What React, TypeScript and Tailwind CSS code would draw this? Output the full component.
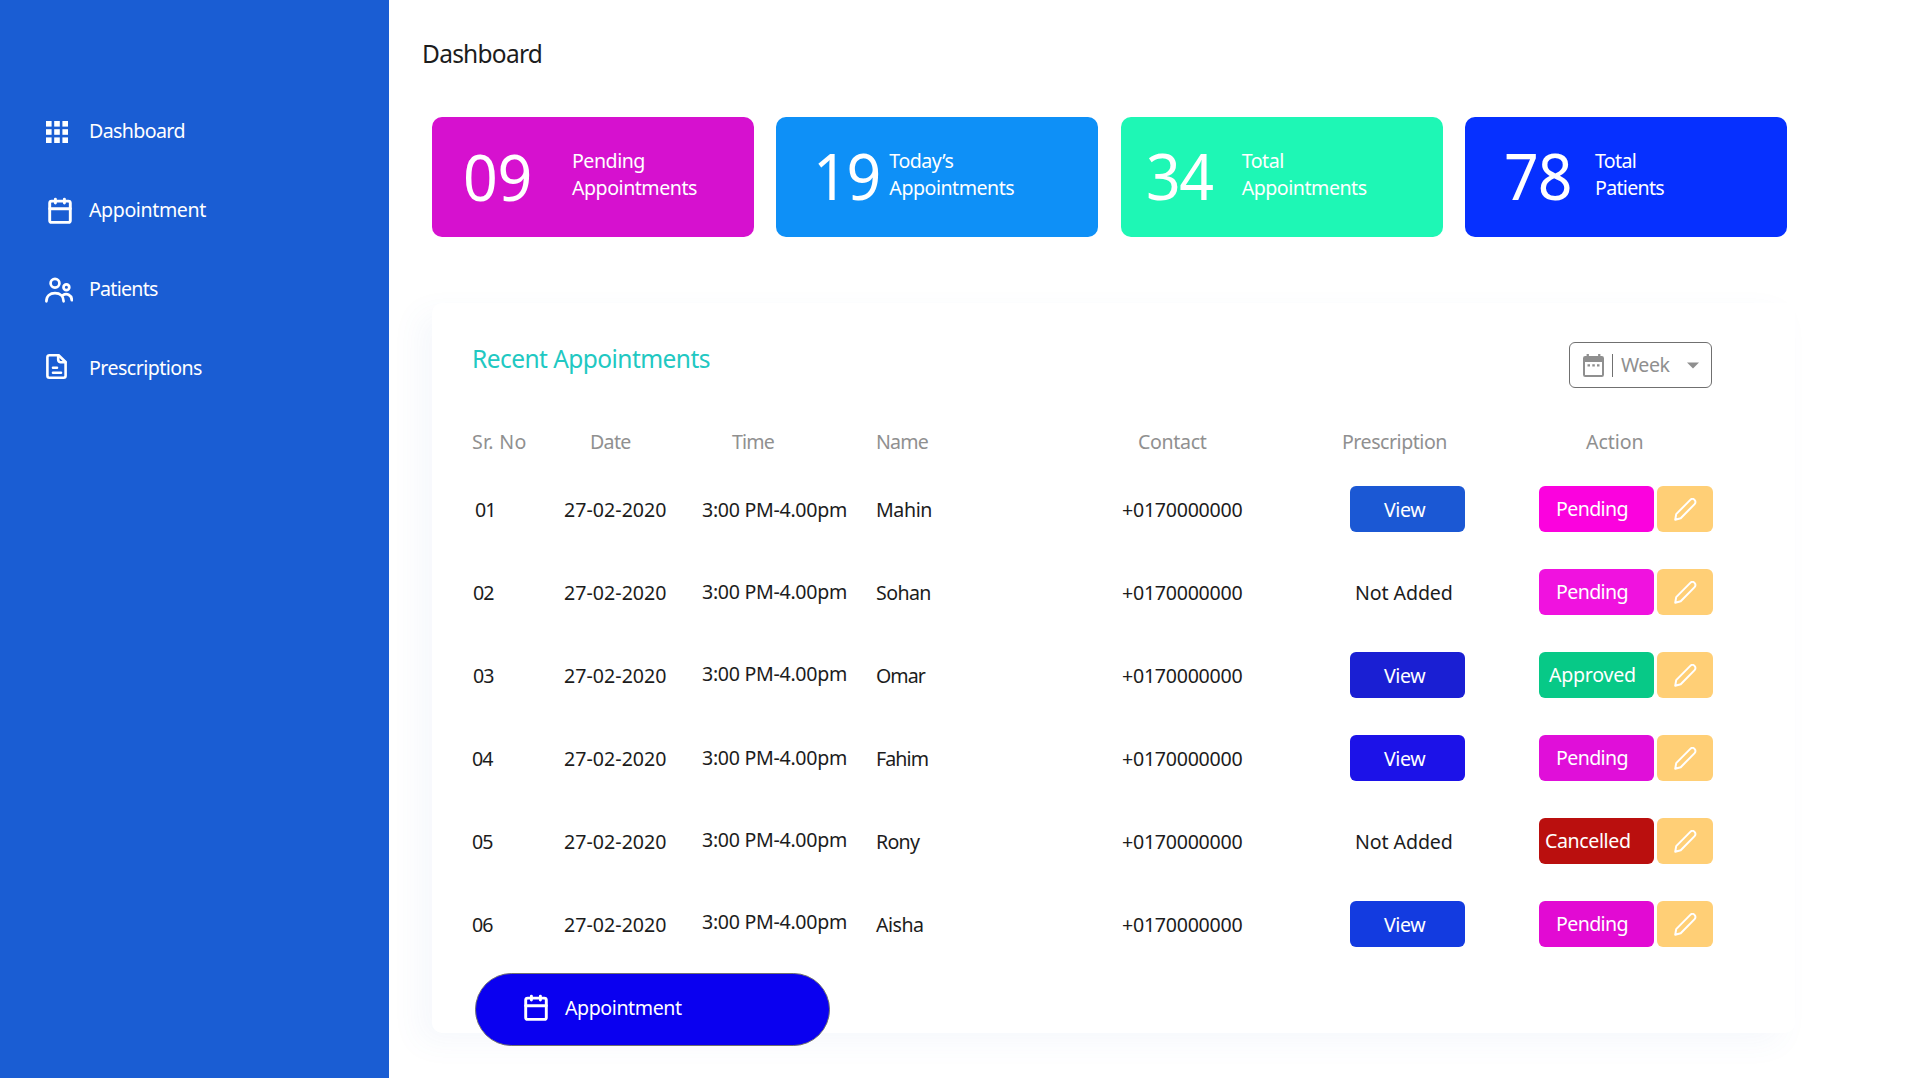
import React from 'react';

function GridIcon() {
  const cells = [0, 8.2, 16.4];
  return (
    <svg className="mt-[2px]" width="22" height="22" viewBox="0 0 22 22" fill="currentColor">
      {cells.map((y) => cells.map((x) => <rect key={`${x}-${y}`} x={x} y={y} width="5.6" height="5.6" />))}
    </svg>
  );
}

function CalendarIcon({ className = '' }: { className?: string }) {
  return (
    <svg
      className={className}
      width="24"
      height="27"
      viewBox="0 0 24 27"
      fill="none"
      stroke="currentColor"
      strokeWidth="2.9"
      strokeLinecap="round"
      strokeLinejoin="round"
    >
      <rect x="1.7" y="4.1" width="20.6" height="21.3" rx="2" />
      <path d="M1.7 11.8h20.6M7.4 2.1v4M16.4 2.1v4" />
    </svg>
  );
}

function PatientsIcon() {
  return (
    <svg className="mt-px" width="28" height="28" viewBox="0 0 28 28" fill="none" stroke="currentColor" strokeWidth="2.7" strokeLinecap="round">
      <circle cx="10" cy="7.3" r="4.4" />
      <circle cx="21.4" cy="11.3" r="2.9" />
      <path d="M1.4 25.3C1.4 20.2 5 17.2 10 17.2s8.6 3 8.6 8.1" />
      <path d="M17.6 19.3c4-2.7 9.1-.6 9.2 4.9" />
    </svg>
  );
}

function DocumentIcon() {
  return (
    <svg className="mb-[3px]" width="21" height="27" viewBox="0 0 21 27" fill="none" stroke="currentColor" strokeWidth="2.6" strokeLinecap="round" strokeLinejoin="round">
      <path d="M12.6 2.2H3.4a2 2 0 0 0-2 2v18.6a2 2 0 0 0 2 2h14.2a2 2 0 0 0 2-2V9z" />
      <path d="M12.2 2.6v4.2a2.4 2.4 0 0 0 2.4 2.4h4.8M7 14.8h4M7 19.7h8" />
    </svg>
  );
}

function PencilIcon() {
  return (
    <svg width="23" height="23" viewBox="0 0 23 23" fill="none" stroke="currentColor" strokeWidth="2" strokeLinejoin="round">
      <path d="M1.2 21.8l1-5.7L16.3 1.9a2.9 2.9 0 0 1 4.3 4.2L6.7 20.2z" />
    </svg>
  );
}

function FilterCalendarIcon() {
  return (
    <svg width="21" height="23" viewBox="0 0 21 23" fill="currentColor">
      <path
        fillRule="evenodd"
        d="M3.6 0h2.3v2h9.2V0h2.3v2h1.4A2.2 2.2 0 0 1 21 4.2v16.6a2.2 2.2 0 0 1-2.2 2.2H2.2A2.2 2.2 0 0 1 0 20.8V4.2A2.2 2.2 0 0 1 2.2 2h1.4zM2 8v12.9h17V8z"
      />
      <path d="M4.5 10.2h2.5v2.4h-2.5zM9.3 10.2h2.5v2.4h-2.5zM14 10.2h2.5v2.4h-2.5z" />
    </svg>
  );
}

const nav = [
  { label: 'Dashboard', icon: <GridIcon />, pad: 'pl-[46px]', track: 'tracking-[-0.62px]' },
  { label: 'Appointment', icon: <CalendarIcon />, pad: 'pl-[48px]', track: 'tracking-[-0.4px]' },
  { label: 'Patients', icon: <PatientsIcon />, pad: 'pl-[45px]', track: 'tracking-[-0.75px]' },
  { label: 'Prescriptions', icon: <DocumentIcon />, pad: 'pl-[46px]', track: 'tracking-[-0.55px]' },
];

const stats = [
  { n: '09', a: 'Pending', b: 'Appointments', bg: 'bg-[#d611cf]', pad: 'pl-[31px]', num: 'w-[109px] pt-[15px] tracking-[-0.3px]', text: 'tracking-[-0.48px]' },
  { n: '19', a: 'Today’s', b: 'Appointments', bg: 'bg-[#0e90f7]', pad: 'pl-[37px]', num: 'w-[76px] pt-[14px] tracking-[-1.3px]', text: 'tracking-[-0.48px]' },
  { n: '34', a: 'Total', b: 'Appointments', bg: 'bg-[#1ef7b5]', pad: 'pl-[25px]', num: 'w-[96px] pt-[14px] tracking-[-1.5px]', text: 'tracking-[-0.48px]' },
  { n: '78', a: 'Total', b: 'Patients', bg: 'bg-[#0630ff]', pad: 'pl-[39px]', num: 'w-[91px] pt-[14px] tracking-[-1px]', text: 'tracking-[-0.7px]' },
];

const rows = [
  { no: '01', pad: 'pl-[3px]', name: 'Mahin', nt: 'tracking-[-0.4px]', time: 'pb-0', view: 'bg-[#1b58d4]', status: 'Pending', sc: 'bg-[#fb02de] pl-[17px] tracking-[-0.62px]' },
  { no: '02', pad: 'pl-px', name: 'Sohan', nt: 'tracking-[-0.6px]', time: 'pb-[2px]', view: '', status: 'Pending', sc: 'bg-[#f012df] pl-[17px] tracking-[-0.62px]' },
  { no: '03', pad: 'pl-px', name: 'Omar', nt: 'tracking-[-0.95px]', time: 'pb-[4px]', view: 'bg-[#1a1fd3]', status: 'Approved', sc: 'bg-[#07c987] pl-[10px] tracking-[-0.25px]' },
  { no: '04', pad: 'pl-0', name: 'Fahim', nt: 'tracking-[-0.9px]', time: 'pb-[2px]', view: 'bg-[#1c12e8]', status: 'Pending', sc: 'bg-[#e00fd9] pl-[17px] tracking-[-0.62px]' },
  { no: '05', pad: 'pl-0', name: 'Rony', nt: 'tracking-[-0.75px]', time: 'pb-[4px]', view: '', status: 'Cancelled', sc: 'bg-[#ba0f0e] pl-[6px] tracking-[-0.4px]' },
  { no: '06', pad: 'pl-0', name: 'Aisha', nt: 'tracking-[-0.5px]', time: 'pb-[6px]', view: 'bg-[#133be0]', status: 'Pending', sc: 'bg-[#e20ad3] pl-[17px] tracking-[-0.62px]' },
];

const columns = 'grid grid-cols-[92px_138px_174px_246px_220px_197px_174px] items-center';

export default function App() {
  return (
    <div className="flex h-[1078px] w-[1920px] overflow-hidden bg-white font-['Noto_Sans',sans-serif] text-[19.6px] leading-[26px] whitespace-nowrap text-black">
      <aside className="w-[389px] shrink-0 bg-[#1a5dd3] pt-[118px] text-white">
        <nav className="flex flex-col gap-[53px]">
          {nav.map((item) => (
            <a key={item.label} className="flex h-[26px] items-center">
              <span className={`flex h-[26px] w-[89px] shrink-0 items-center ${item.pad}`}>{item.icon}</span>
              <span className={item.track}>{item.label}</span>
            </a>
          ))}
        </nav>
      </aside>

      <main className="flex flex-col">
        <h1 className="mt-[38px] ml-[33px] h-8 text-[24.5px] leading-8 tracking-[-0.75px] text-[#1c1c1c]">Dashboard</h1>

        <section className="mt-[47px] ml-[43px] grid w-[1355px] grid-cols-4 gap-[22.4px]">
          {stats.map((s) => (
            <div key={s.n} className={`flex h-[120px] rounded-[10px] text-white ${s.bg} ${s.pad}`}>
              <div className={`shrink-0 text-[64px] leading-[90px] ${s.num}`}>
                <span className="block origin-left scale-x-95">{s.n}</span>
              </div>
              <div className={`pt-[30px] leading-[27px] ${s.text}`}>
                <div>{s.a}</div>
                <div>{s.b}</div>
              </div>
            </div>
          ))}
        </section>

        <section className="relative mt-[66px] ml-[43px] h-[730px] w-[1363px] rounded-[10px] bg-white pl-10 shadow-[-14px_10px_30px_rgba(70,110,200,0.05)]">
          <div className="flex justify-between pt-[39px] pr-[83px]">
            <h2 className="mt-px h-8 text-[24.5px] leading-8 tracking-[-0.55px] text-[#21c8c2]">Recent Appointments</h2>
            <button className="flex h-[46px] w-[143px] items-center rounded-[6px] border border-[#707070] pl-[13px] text-[#8f8f8f]">
              <FilterCalendarIcon />
              <span className="ml-2 h-[23px] w-px bg-[#707070]" />
              <span className="ml-2 tracking-[-0.5px]">Week</span>
              <svg className="ml-[18px]" width="12" height="7" viewBox="0 0 12 7" fill="currentColor">
                <path d="M0 .5h12L6 6.5z" />
              </svg>
            </button>
          </div>

          <div className={`mt-[41px] h-[26px] text-[#909090] ${columns}`}>
            <span className="tracking-[0.3px]">Sr. No</span>
            <span className="pl-[26px] tracking-[-0.7px]">Date</span>
            <span className="pl-[30px] tracking-[-0.8px]">Time</span>
            <span className="tracking-[-0.8px]">Name</span>
            <span className="pl-4 tracking-[-0.35px]">Contact</span>
            <span className="tracking-[-0.48px]">Prescription</span>
            <span className="pl-[47px] tracking-[-0.1px]">Action</span>
          </div>

          <div className="mt-[31px] flex flex-col gap-[37px] text-[#1c1c1c]">
            {rows.map((r) => (
              <div key={r.no} className={`h-[46px] ${columns}`}>
                <span className={`pt-[2px] tracking-[-0.9px] ${r.pad}`}>{r.no}</span>
                <span className="pt-[2px] tracking-[0.03px]">27-02-2020</span>
                <span className={`tracking-[-0.3px] ${r.time}`}>
                  <span className="block pt-[2px]">3:00 PM-4.00pm</span>
                </span>
                <span className={`pt-[2px] ${r.nt}`}>{r.name}</span>
                <span className="pt-[2px] tracking-[-0.27px]">+0170000000</span>
                {r.view ? (
                  <button className={`ml-2 flex h-[46px] w-[115px] items-center rounded-[6px] pt-[2px] pl-[34px] tracking-[-0.4px] text-white ${r.view}`}>
                    View
                  </button>
                ) : (
                  <span className="pt-[2px] pl-[13px] tracking-[-0.1px]">Not Added</span>
                )}
                <div className="flex gap-[3px] text-white">
                  <span className={`flex h-[46px] w-[115px] items-center rounded-[6px] ${r.sc}`}>{r.status}</span>
                  <button className="flex h-[46px] w-14 items-center justify-center rounded-[6px] bg-[#ffcf76]">
                    <PencilIcon />
                  </button>
                </div>
              </div>
            ))}
          </div>

          <button className="absolute top-[670px] left-[43px] flex h-[73px] w-[355px] items-center rounded-full border border-[#707070] bg-[#0a00f0] pl-12 text-white">
            <CalendarIcon className="mb-[5px]" />
            <span className="ml-[17px] pb-[3px] tracking-[-0.42px]">Appointment</span>
          </button>
        </section>
      </main>
    </div>
  );
}
